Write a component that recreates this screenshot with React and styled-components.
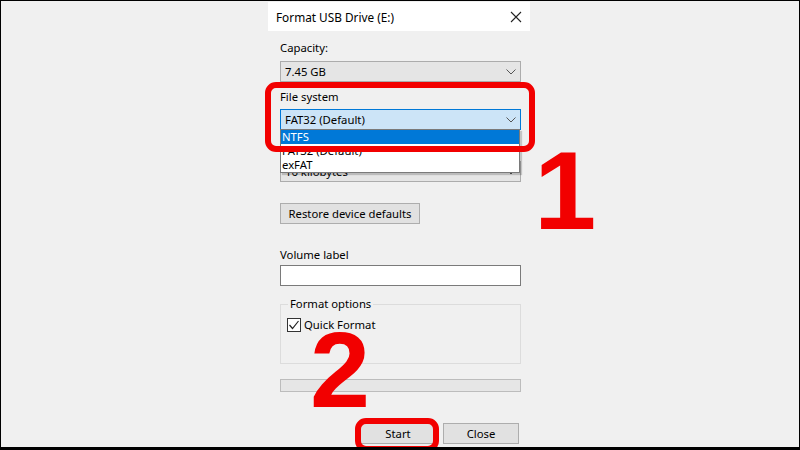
import React from "react";
import styled, { createGlobalStyle } from "styled-components";

const GlobalStyle = createGlobalStyle`
  html, body { margin: 0; padding: 0; background: #000; }
  body { font-family: "Noto Sans", "Open Sans", sans-serif; }
  * { box-sizing: border-box; }
`;

const Frame = styled.div`
  position: relative;
  width: 800px;
  height: 450px;
  background: #f0f0f0;
  border-top: 1px solid #000;
  border-left: 1px solid #000;
  border-right: 1px solid #000;
  border-bottom: 3px solid #000;
  overflow: hidden;
  display: flex;
  justify-content: center;
  font-size: 11.3px;
  color: #000;
`;

const Dialog = styled.div`
  width: 262px;
  margin-left: -2px;
  display: flex;
  flex-direction: column;
`;

const TitleBar = styled.div`
  height: 29px;
  background: #fff;
  display: flex;
  align-items: center;
  justify-content: space-between;
  padding: 0 8px 0 8px;
  font-size: 11.8px;
  margin-top: 1px;
`;

const Body = styled.div`
  position: relative;
  display: flex;
  flex-direction: column;
  padding: 0 9px 0 12px;
`;

const Label = styled.div`
  line-height: 16px;
  height: 16px;
  margin-top: ${(p) => p.$mt || 0}px;
  white-space: nowrap;
`;

const Select = styled.div`
  height: 21px;
  margin-top: ${(p) => p.$mt || 0}px;
  display: flex;
  align-items: center;
  justify-content: space-between;
  padding: 0 4px 0 4px;
  background: ${(p) => (p.$focus ? "#cce4f7" : "#e5e5e5")};
  border: 1px solid ${(p) => (p.$focus ? "#0078d7" : "#acacac")};
  white-space: nowrap;
`;

const Chevron = () => (
  <svg width="10" height="6" viewBox="0 0 10 6">
    <polyline points="0.5,0.5 5,5 9.5,0.5" fill="none" stroke="#555" strokeWidth="1" />
  </svg>
);

const DropList = styled.div`
  position: absolute;
  left: 12px;
  top: 98px;
  width: 240px;
  height: 44px;
  background: #fff;
  border: 1px solid #7a7a7a;
  box-shadow: 2px 2px 1px rgba(0, 0, 0, 0.18);
  display: flex;
  flex-direction: column;
`;

const Option = styled.div`
  height: 14px;
  line-height: 14px;
  padding-left: 1px;
  background: ${(p) => (p.$active ? "#0078d7" : "transparent")};
  color: ${(p) => (p.$active ? "#fff" : "#000")};
`;

const Button = styled.div`
  height: 21px;
  width: ${(p) => p.$w}px;
  margin-top: ${(p) => p.$mt || 0}px;
  background: #e1e1e1;
  border: 1px solid #adadad;
  display: flex;
  align-items: center;
  justify-content: center;
  white-space: nowrap;
`;

const TextInput = styled.div`
  height: 21px;
  margin-top: ${(p) => p.$mt || 0}px;
  background: #fff;
  border: 1px solid #7a7a7a;
`;

const Group = styled.fieldset`
  margin: 10px 0 0 0;
  padding: 0 6px 0 6px;
  height: 68px;
  border: 1px solid #dcdcdc;
  min-width: 0;
`;

const Legend = styled.legend`
  padding: 0 2px;
  margin-left: 1px;
  line-height: 16px;
  font-size: 11.3px;
`;

const CheckRow = styled.div`
  display: flex;
  align-items: center;
  gap: 3px;
  margin-top: 5px;
`;

const Box = styled.div`
  width: 14px;
  height: 14px;
  border: 1px solid #333;
  background: #fff;
  display: flex;
  align-items: center;
  justify-content: center;
`;

const Progress = styled.div`
  height: 13px;
  margin-top: 15px;
  background: #e6e6e6;
  border: 1px solid #bcbcbc;
`;

const ButtonRow = styled.div`
  display: flex;
  justify-content: flex-end;
  gap: 7px;
  margin-top: 31px;
  padding-right: 2px;
`;

const RedBox = styled.div`
  position: absolute;
  left: ${(p) => p.$x}px;
  top: ${(p) => p.$y}px;
  width: ${(p) => p.$w}px;
  height: ${(p) => p.$h}px;
  border: 6px solid #f20000;
  border-radius: 11px;
  pointer-events: none;
`;

const BigNum = styled.div`
  position: absolute;
  left: ${(p) => p.$x}px;
  top: ${(p) => p.$y}px;
  font-family: "Liberation Sans", Arial, sans-serif;
  font-weight: bold;
  font-size: ${(p) => p.$size}px;
  line-height: 1;
  color: #f20000;
`;

export default function App() {
  return (
    <>
      <GlobalStyle />
      <Frame>
        <Dialog>
          <TitleBar>
            <span>Format USB Drive (E:)</span>
            <svg width="12" height="12" viewBox="0 0 12 12">
              <path d="M1 1 L11 11 M11 1 L1 11" stroke="#222" strokeWidth="1.1" />
            </svg>
          </TitleBar>
          <Body>
            <Label $mt={9}>Capacity:</Label>
            <Select $mt={5}>
              <span>7.45 GB</span>
              <Chevron />
            </Select>
            <Label $mt={7}>File system</Label>
            <Select $mt={4} $focus>
              <span>FAT32 (Default)</span>
              <Chevron />
            </Select>
            <Label $mt={6}>Allocation unit size</Label>
            <Select $mt={9}>
              <span>16 kilobytes</span>
              <Chevron />
            </Select>
            <Button $w={140} $mt={21}>Restore device defaults</Button>
            <Label $mt={23}>Volume label</Label>
            <TextInput $mt={2} />
            <Group>
              <Legend>Format options</Legend>
              <CheckRow>
                <Box>
                  <svg width="12" height="12" viewBox="0 0 12 12">
                    <polyline points="1.5,6 4.5,9.5 10.5,2" fill="none" stroke="#222" strokeWidth="1.2" />
                  </svg>
                </Box>
                <span>Quick Format</span>
              </CheckRow>
            </Group>
            <Progress />
            <ButtonRow>
              <Button $w={76}>Start</Button>
              <Button $w={76}>Close</Button>
            </ButtonRow>
            <DropList>
              <Option $active>NTFS</Option>
              <Option>FAT32 (Default)</Option>
              <Option>exFAT</Option>
            </DropList>
          </Body>
        </Dialog>
        <RedBox $x={264} $y={81} $w={270} $h={70} />
        <RedBox $x={354} $y={417} $w={84} $h={34} />
        <BigNum $x={533} $y={134} $size={112}>1</BigNum>
        <BigNum $x={309} $y={315} $size={108}>2</BigNum>
      </Frame>
    </>
  );
}
